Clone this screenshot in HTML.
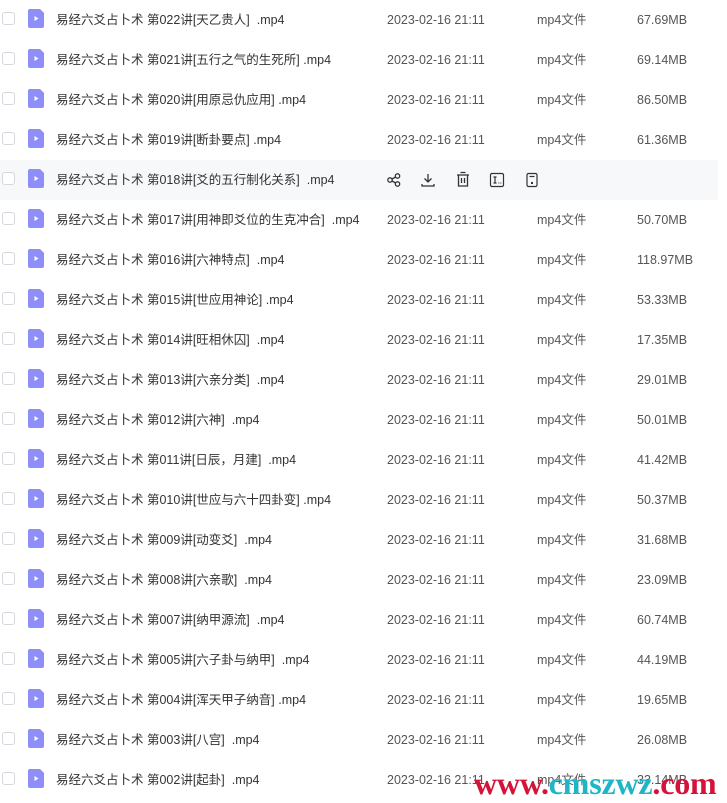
<!DOCTYPE html>
<html><head><meta charset="utf-8"><style>
body{margin:0;width:727px;height:803px;overflow:hidden;background:#fff;font-family:"Liberation Sans","Noto Sans CJK SC",sans-serif;font-size:12.5px;color:#333;position:relative}
.r{position:absolute;left:0;width:718px;height:40px;line-height:40px}
.r.h{background:#f7f8fa}
.cb{position:absolute;left:2px;top:12px;width:11px;height:11px;border:1px solid #d5d7dc;border-radius:3px;background:#fff}
.ic{position:absolute;left:28px;top:9px;width:16px;height:19px}
.n{position:absolute;left:56px;top:0;white-space:pre}
.d{position:absolute;left:387px;top:0;color:#555}
.t{position:absolute;left:537px;top:0;color:#555}
.s{position:absolute;left:637px;top:0;color:#555}
.ops{position:absolute}
.wm{position:absolute;left:474px;top:767px;line-height:32px;font-family:"Liberation Serif",serif;font-weight:bold;font-size:32px;color:#d4123a;white-space:nowrap;letter-spacing:-0.2px}
.wm span{color:#1fb5c8}
</style></head><body>
<div id="list"></div>
<script>
var rows=[["第022讲[天乙贵人]  .mp4","67.69MB"],["第021讲[五行之气的生死所] .mp4","69.14MB"],["第020讲[用原忌仇应用] .mp4","86.50MB"],["第019讲[断卦要点] .mp4","61.36MB"],["第018讲[爻的五行制化关系]  .mp4",""],["第017讲[用神即爻位的生克冲合]  .mp4","50.70MB"],["第016讲[六神特点]  .mp4","118.97MB"],["第015讲[世应用神论] .mp4","53.33MB"],["第014讲[旺相休囚]  .mp4","17.35MB"],["第013讲[六亲分类]  .mp4","29.01MB"],["第012讲[六神]  .mp4","50.01MB"],["第011讲[日辰，月建]  .mp4","41.42MB"],["第010讲[世应与六十四卦变] .mp4","50.37MB"],["第009讲[动变爻]  .mp4","31.68MB"],["第008讲[六亲歌]  .mp4","23.09MB"],["第007讲[纳甲源流]  .mp4","60.74MB"],["第005讲[六子卦与纳甲]  .mp4","44.19MB"],["第004讲[浑天甲子纳音] .mp4","19.65MB"],["第003讲[八宫]  .mp4","26.08MB"],["第002讲[起卦]  .mp4","33.14MB"]];
var ic='<svg class="ic" viewBox="0 0 16 19"><path d="M2 0h10l4 4v13a2 2 0 0 1-2 2H2a2 2 0 0 1-2-2V2a2 2 0 0 1 2-2z" fill="#8e8efa"/><path d="M6.5 7l4 2.5-4 2.5z" fill="#fff"/></svg>';
var ops='<svg class="ops" style="left:386px;top:12px" width="16" height="16" viewBox="0 0 16 16" fill="none" stroke="#333" stroke-width="1.3"><circle cx="4" cy="8" r="2.2"/><circle cx="11.5" cy="4" r="2.2"/><circle cx="11.5" cy="12" r="2.2"/><path d="M6 7l3.6-2M6 9l3.6 2"/></svg>'+
'<svg class="ops" style="left:420px;top:12px" width="16" height="16" viewBox="0 0 16 16" fill="none" stroke="#333" stroke-width="1.3"><path d="M8 2v8M4.5 6.5L8 10l3.5-3.5M2 12v2h12v-2"/></svg>'+
'<svg class="ops" style="left:455px;top:11px" width="16" height="17" viewBox="0 0 16 17" fill="none" stroke="#333" stroke-width="1.3"><path d="M5.5 1.5h5M2 4h12M3.5 4v11h9V4M6.5 7v5M9.5 7v5"/></svg>'+
'<svg class="ops" style="left:489px;top:12px" width="16" height="16" viewBox="0 0 16 16" fill="none" stroke="#333" stroke-width="1.2"><rect x="1.5" y="1.5" width="13" height="13" rx="1.5"/><path d="M4.5 5h3M6 5v6M4.5 11h3M9.5 11h.8M11.5 11h.8"/></svg>'+
'<svg class="ops" style="left:524px;top:12px" width="16" height="16" viewBox="0 0 16 16" fill="none" stroke="#333" stroke-width="1.2"><rect x="3" y="1.5" width="10" height="13" rx="1.5"/><path d="M5.5 4.5h5"/><rect x="7" y="10" width="2" height="2" fill="#333" stroke="none"/></svg>';
var h='';
rows.forEach(function(r,i){
 var top=i*40;
 h+='<div class="r'+(i==4?' h':'')+'" style="top:'+top+'px"><div class="cb"></div>'+ic+'<div class="n">易经六爻占卜术 '+r[0]+'</div>';
 if(i==4)h+=ops;else h+='<div class="d">2023-02-16 21:11</div><div class="t">mp4文件</div><div class="s">'+r[1]+'</div>';
 h+='</div>';
});
document.getElementById('list').innerHTML=h;
</script>
<div class="wm">www.<span>cmszwz</span>.com</div>
</body></html>
